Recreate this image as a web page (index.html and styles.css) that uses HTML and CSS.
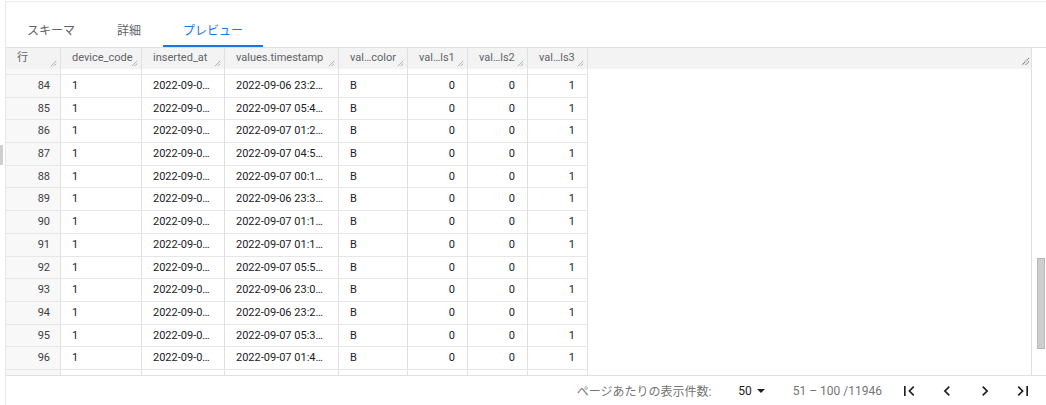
FILE: index.html
```html
<!DOCTYPE html>
<html lang="ja">
<head>
<meta charset="utf-8">
<title>プレビュー</title>
<link rel="stylesheet" href="styles.css">
</head>
<body>
<div class="gutter"><div class="gutter-thumb"></div></div>
<div class="page">
  <nav class="tabs">
    <div class="tab">スキーマ</div>
    <div class="tab">詳細</div>
    <div class="tab active">プレビュー</div>
  </nav>
  <div class="grid-area">
    <div class="table">
      <div class="head">
        <div class="hcell"><span class="ht">行</span><svg class="rz" viewBox="0 0 8 8"><path d="M7 1L1 7M7 4L4 7"/></svg></div>
        <div class="hcell"><span class="ht">device_code</span><svg class="rz" viewBox="0 0 8 8"><path d="M7 1L1 7M7 4L4 7"/></svg></div>
        <div class="hcell"><span class="ht">inserted_at</span><svg class="rz" viewBox="0 0 8 8"><path d="M7 1L1 7M7 4L4 7"/></svg></div>
        <div class="hcell"><span class="ht">values.timestamp</span><svg class="rz" viewBox="0 0 8 8"><path d="M7 1L1 7M7 4L4 7"/></svg></div>
        <div class="hcell"><span class="ht">val…color</span><svg class="rz" viewBox="0 0 8 8"><path d="M7 1L1 7M7 4L4 7"/></svg></div>
        <div class="hcell"><span class="ht">val…ls1</span><svg class="rz" viewBox="0 0 8 8"><path d="M7 1L1 7M7 4L4 7"/></svg></div>
        <div class="hcell"><span class="ht">val…ls2</span><svg class="rz" viewBox="0 0 8 8"><path d="M7 1L1 7M7 4L4 7"/></svg></div>
        <div class="hcell"><span class="ht">val…ls3</span><svg class="rz" viewBox="0 0 8 8"><path d="M7 1L1 7M7 4L4 7"/></svg></div>
        <div class="hcell filler"><svg class="rz big" viewBox="0 0 8 8"><path d="M7 1L1 7M7 4L4 7"/></svg></div>
      </div>
      <div class="body">
        <div class="rows">
          <div class="row partial"><div class="c num"></div><div class="c"></div><div class="c"></div><div class="c"></div><div class="c"></div><div class="c"></div><div class="c"></div><div class="c"></div></div>
          <div class="row"><div class="c num">84</div><div class="c">1</div><div class="c">2022-09-0…</div><div class="c">2022-09-06 23:2…</div><div class="c">B</div><div class="c r">0</div><div class="c r">0</div><div class="c r">1</div></div>
          <div class="row"><div class="c num">85</div><div class="c">1</div><div class="c">2022-09-0…</div><div class="c">2022-09-07 05:4…</div><div class="c">B</div><div class="c r">0</div><div class="c r">0</div><div class="c r">1</div></div>
          <div class="row"><div class="c num">86</div><div class="c">1</div><div class="c">2022-09-0…</div><div class="c">2022-09-07 01:2…</div><div class="c">B</div><div class="c r">0</div><div class="c r">0</div><div class="c r">1</div></div>
          <div class="row"><div class="c num">87</div><div class="c">1</div><div class="c">2022-09-0…</div><div class="c">2022-09-07 04:5…</div><div class="c">B</div><div class="c r">0</div><div class="c r">0</div><div class="c r">1</div></div>
          <div class="row"><div class="c num">88</div><div class="c">1</div><div class="c">2022-09-0…</div><div class="c">2022-09-07 00:1…</div><div class="c">B</div><div class="c r">0</div><div class="c r">0</div><div class="c r">1</div></div>
          <div class="row"><div class="c num">89</div><div class="c">1</div><div class="c">2022-09-0…</div><div class="c">2022-09-06 23:3…</div><div class="c">B</div><div class="c r">0</div><div class="c r">0</div><div class="c r">1</div></div>
          <div class="row"><div class="c num">90</div><div class="c">1</div><div class="c">2022-09-0…</div><div class="c">2022-09-07 01:1…</div><div class="c">B</div><div class="c r">0</div><div class="c r">0</div><div class="c r">1</div></div>
          <div class="row"><div class="c num">91</div><div class="c">1</div><div class="c">2022-09-0…</div><div class="c">2022-09-07 01:1…</div><div class="c">B</div><div class="c r">0</div><div class="c r">0</div><div class="c r">1</div></div>
          <div class="row"><div class="c num">92</div><div class="c">1</div><div class="c">2022-09-0…</div><div class="c">2022-09-07 05:5…</div><div class="c">B</div><div class="c r">0</div><div class="c r">0</div><div class="c r">1</div></div>
          <div class="row"><div class="c num">93</div><div class="c">1</div><div class="c">2022-09-0…</div><div class="c">2022-09-06 23:0…</div><div class="c">B</div><div class="c r">0</div><div class="c r">0</div><div class="c r">1</div></div>
          <div class="row"><div class="c num">94</div><div class="c">1</div><div class="c">2022-09-0…</div><div class="c">2022-09-06 23:2…</div><div class="c">B</div><div class="c r">0</div><div class="c r">0</div><div class="c r">1</div></div>
          <div class="row"><div class="c num">95</div><div class="c">1</div><div class="c">2022-09-0…</div><div class="c">2022-09-07 05:3…</div><div class="c">B</div><div class="c r">0</div><div class="c r">0</div><div class="c r">1</div></div>
          <div class="row"><div class="c num">96</div><div class="c">1</div><div class="c">2022-09-0…</div><div class="c">2022-09-07 01:4…</div><div class="c">B</div><div class="c r">0</div><div class="c r">0</div><div class="c r">1</div></div>
          <div class="row partial"><div class="c num"></div><div class="c"></div><div class="c"></div><div class="c"></div><div class="c"></div><div class="c"></div><div class="c"></div><div class="c"></div></div>
        </div>
      </div>
    </div>
    <div class="vscroll"><div class="vthumb"></div></div>
  </div>
  <footer class="pager">
    <span class="label">ページあたりの表示件数:</span>
    <span class="size">50<svg class="caret" viewBox="0 0 10 5"><path d="M0 0h10L5 5z"/></svg></span>
    <span class="range">51 – 100 /11946</span>
    <span class="navs">
      <svg class="nav" viewBox="0 0 24 24"><path d="M18.41 16.59L13.82 12l4.59-4.59L17 6l-6 6 6 6zM6 6h2v12H6z"/></svg>
      <svg class="nav" viewBox="0 0 24 24"><path d="M15.41 7.41L14 6l-6 6 6 6 1.41-1.41L10.83 12z"/></svg>
      <svg class="nav" viewBox="0 0 24 24"><path d="M10 6L8.59 7.41 13.17 12l-4.58 4.59L10 18l6-6z"/></svg>
      <svg class="nav" viewBox="0 0 24 24"><path d="M5.59 7.41L10.18 12l-4.59 4.59L7 18l6-6-6-6zM16 6h2v12h-2z"/></svg>
    </span>
  </footer>
</div>
</body>
</html>
```

FILE: styles.css
```css
* { box-sizing: border-box; }
html, body { margin: 0; padding: 0; background: #fff; }
body {
  display: flex;
  width: 1046px;
  height: 405px;
  overflow: hidden;
  font-family: Roboto, "Noto Sans CJK JP", sans-serif;
  color: #202124;
}
.gutter {
  width: 5px;
  flex: none;
  padding-top: 145px;
}
.gutter-thumb {
  width: 3px;
  height: 20px;
  background: #cfcfcf;
}
.page {
  flex: 1;
  margin-top: 1px;
  border-left: 1px solid #e6e6e6;
  border-top: 1px solid #ececec;
  display: flex;
  flex-direction: column;
  min-width: 0;
}
.tabs {
  display: flex;
  gap: 2px;
  padding-left: 1px;
  height: 45px;
  align-items: flex-end;
}
.tab {
  height: 31px;
  padding: 0 20px;
  font-size: 12px;
  line-height: 31px;
  color: #5f6368;
  border-bottom: 2px solid transparent;
}
.tab.active {
  color: #1a73e8;
  border-bottom-color: #1a73e8;
}
.grid-area {
  display: flex;
  border-top: 1px solid #e0e0e0;
  height: 328px;
}
.table {
  flex: 1;
  display: flex;
  flex-direction: column;
  border-right: 1px solid #e0e0e0;
  min-width: 0;
}
.head, .row {
  display: grid;
  grid-template-columns: 55px 81px 83px 114px 69px 60px 60px 60px;
}
.head {
  grid-template-columns: 55px 81px 83px 114px 69px 60px 60px 60px 1fr;
  height: 21px;
  background: #f3f3f3;
  flex: none;
}
.hcell {
  position: relative;
  border-right: 1px solid #e0e0e0;
  padding: 3px 0 0 11px;
  font-size: 11px;
  line-height: 14px;
  color: #5f6368;
  white-space: nowrap;
}
.hcell.filler { border-right: none; }
.ht { display: block; }
.rz {
  position: absolute;
  right: 3px;
  bottom: 2px;
  width: 7px;
  height: 7px;
  fill: none;
  stroke: #777;
  stroke-width: 1;
  stroke-dasharray: 1 0.6;
}
.rz.big { width: 9px; height: 9px; right: 1px; bottom: 3px; }
.body {
  flex: 1;
  overflow: hidden;
}
.rows { margin-top: -16.7px; }
.row { height: 22.7px; }
.c {
  border-right: 1px solid #e0e0e0;
  border-bottom: 1px solid #e6e6e6;
  font-size: 11px;
  line-height: 21.7px;
  padding: 0 12px 0 11px;
  white-space: nowrap;
  overflow: hidden;
  color: #202124;
}
.c.num {
  background: #f8f8f8;
  text-align: right;
  padding-right: 10px;
  color: #3c4043;
}
.c.r { text-align: right; }
.vscroll {
  width: 14px;
  flex: none;
  padding: 210px 1px 0 5px;
}
.vthumb {
  height: 91px;
  background: #cdcdcd;
  border: 1px solid #b9b9b9;
}
.pager {
  border-top: 1px solid #e0e0e0;
  height: 30px;
  display: flex;
  align-items: center;
  justify-content: flex-end;
  font-size: 12px;
  color: #757575;
  padding-right: 13px;
}
.label { margin-right: 27px; }
.size {
  display: flex;
  align-items: center;
  color: #202124;
  margin-right: 28px;
}
.caret {
  width: 8px;
  height: 4px;
  margin-left: 5px;
  fill: #202124;
}
.range { margin-right: 17px; }
.navs { display: flex; gap: 18px; }
.nav {
  width: 20px;
  height: 20px;
  fill: #202124;
}
```
